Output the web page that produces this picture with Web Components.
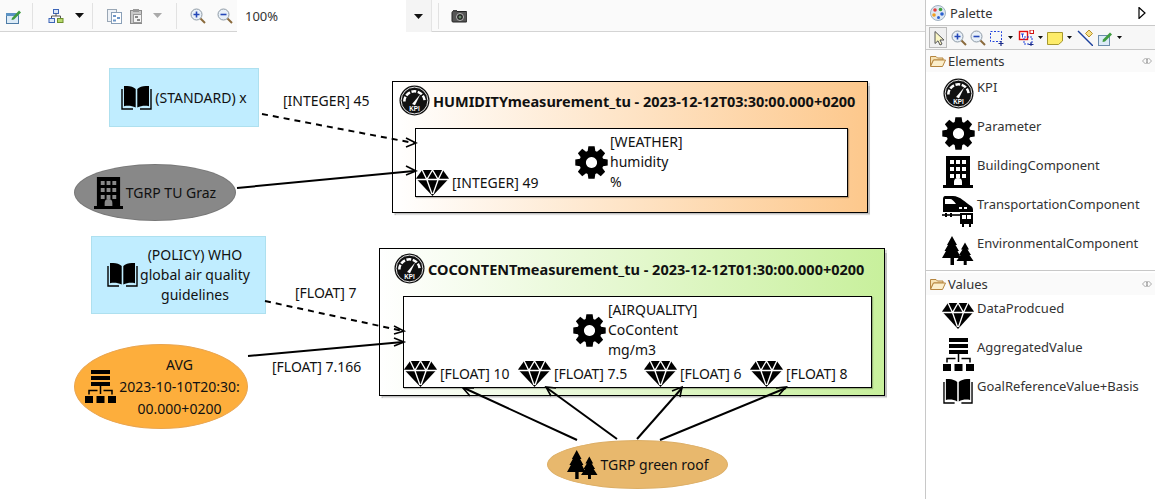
<!DOCTYPE html>
<html><head><meta charset="utf-8">
<style>
html,body{margin:0;padding:0;background:#fff;width:1155px;height:499px;overflow:hidden;font-family:"Noto Sans","Liberation Sans",sans-serif;color:#222}
</style></head><body>
<app-shell>
  <main-area slot="main">
    <top-bar></top-bar>
    <dia-gram></dia-gram>
  </main-area>
  <pal-ette slot="side"></pal-ette>
</app-shell>
<script>
function gearPath(){
  const c=16,R=16,r=11.8,n=8;let d='';
  for(let i=0;i<n;i++){
    const a=i*2*Math.PI/n-Math.PI/2,w=.26,w2=.19;
    const pts=[[r,a-w-.06],[R,a-w2],[R,a+w2],[r,a+w+.06]];
    pts.forEach((p,j)=>{d+=(i==0&&j==0?'M':'L')+(c+p[0]*Math.cos(p[1])).toFixed(2)+' '+(c+p[0]*Math.sin(p[1])).toFixed(2)+' ';});
  }
  return d+'Z M16 10.6a5.4 5.4 0 1 0 0.01 0Z';
}
const ICONS={
 kpi:['0 0 32 32','<circle cx="16" cy="16" r="15.5" fill="#111"/><circle cx="16" cy="16" r="13.8" fill="none" stroke="#fff" stroke-width=".9"/><path d="M5.5 17a10.5 10.5 0 0 1 21 0" fill="none" stroke="#fff" stroke-width="2.6" stroke-dasharray="5 1.6"/><path d="M13.5 19.5L22 9.5 16.5 21Z" fill="#fff"/><text x="16" y="27" text-anchor="middle" font-family="Liberation Sans" font-weight="700" font-size="6.5" fill="#fff">KPI</text>'],
 gear:['0 0 32 32','<path fill="#000" fill-rule="evenodd" d="'+gearPath()+'"/>'],
 building:['0 0 30 32','<path fill="#000" fill-rule="evenodd" d="M3 0H27V29H30V32H0V29H3ZM7 4V8H11V4ZM13 4V8H17V4ZM19 4V8H23V4ZM7 11V15H11V11ZM13 11V15H17V11ZM19 11V15H23V11ZM7 18V22H11V18ZM13 18V22H17V18ZM19 18V22H23V18ZM11 29H19V26A4 4 0 0 0 11 26Z"/>'],
 train:['0 0 32 32','<path fill="#000" fill-rule="evenodd" d="M3 1H11C18 1 24 8 29 11 31 12 31 14 31 16V17H1V4C1 2 2 1 3 1ZM3 4V9H14C12 6 10 4 8 4ZM17 12V14H20V12ZM22 12V14H25V12Z"/><path d="M0 20H18" stroke="#000" stroke-width="1.6"/><path d="M3 18H5V22H3ZM8 18H10V22H8Z" fill="#000"/><path fill="#000" fill-rule="evenodd" d="M18 18H31V29H29V32H27V29H22V32H20V29H18ZM20 20V24H24V20ZM25 20V24H29V20Z"/>'],
 trees:['0 0 32 29','<path fill="#000" d="M10 0L15 9H13.5L17 15H15.5L19 22H12V29H8.5V22H0L4 15H2.5L6 9H5Z"/><path fill="#000" d="M23 6.500L27 13.500H25.500L29 19H27.500L31.500 25H24.700V29H21.700V25H14.500L18.500 19H17L20.500 13.500H19Z"/>'],
 diamond:['0 0 32 27','<path fill="#000" d="M6 1H26L32 9.500 16 27 0 9.500Z"/><path fill="none" stroke="#fff" stroke-width="1.300" d="M0 10.500H32M6 1L10.500 10.500 16 1 21.500 10.500 26 1M10.500 10.500L15.500 25M21.500 10.500L16.500 25"/>'],
 agg:['0 0 31 33','<path fill="#000" d="M6 0H25V4H6ZM6 6H25V10H6ZM6 12H25V16H6ZM0 26H8V33H0ZM11.500 26H19.500V33H11.500ZM23 26H31V33H23Z"/><path fill="none" stroke="#000" stroke-width="1.500" d="M15.500 16V24M4 24.500V20.500H12.500M27 24.500V20.500H18.500"/>'],
 book:['0 0 31 25','<path fill="#000" d="M3 0C7 -.3 12 .5 14.700 3V22.500C11 20.500 7 20 3 21ZM28 0C24 -.3 19 .5 16.300 3V22.500C20 20.500 24 20 28 21Z"/><path fill="none" stroke="#000" stroke-width="1.400" d="M1 3V24H12M30 3V24H19"/>']
};
class XIc extends HTMLElement{connectedCallback(){
  const [vb,body]=ICONS[this.getAttribute('n')];const w=this.getAttribute('w'),h=this.getAttribute('h');
  this.attachShadow({mode:'open'}).innerHTML=`<style>:host{display:block;flex:none;width:${w}px;height:${h}px;line-height:0}svg{display:block}</style><svg width="${w}" height="${h}" viewBox="${vb}" preserveAspectRatio="none">${body}</svg>`;
}}
customElements.define('x-ic',XIc);

/* small toolbar icons */
const TB={
 edit:'<rect x="1.500" y="5.500" width="12" height="10" fill="#dcebf7" stroke="#4d7ba6"/><rect x="1" y="5" width="13" height="3" fill="#5c93c4"/><path d="M7 10L14 2.500 16 4.500 9 11.500 6.500 12Z" fill="#3f9b3f"/>',
 tree:'<rect x="5.500" y="1.500" width="5" height="4" fill="#dde8f7" stroke="#3c65b8"/><path d="M8 5.500V8M3.500 10V8H12.500V10" fill="none" stroke="#555"/><rect x="1" y="10.500" width="5.500" height="4" fill="#dde8f7" stroke="#3c65b8"/><rect x="9.500" y="10.500" width="5.500" height="4" fill="#b7d96d" stroke="#6d8f2c"/>',
 copy:'<rect x="1.500" y="1.500" width="9" height="12" fill="#eef2f7" stroke="#9aa7b5"/><rect x="5.500" y="4.500" width="10" height="11" fill="#fff" stroke="#8aa0b8"/><path d="M7 7H10V9H7ZM11 9H14V11H11ZM7 11.500H10V13.500H7Z" fill="#6f97c8"/>',
 paste:'<rect x="2.500" y="2.500" width="11" height="13" fill="#c9c9c9" stroke="#8b8b8b"/><rect x="5" y="1" width="6" height="3" fill="#999"/><rect x="5.500" y="6.500" width="8" height="8" fill="#f4f4f4" stroke="#999"/><path d="M7 8H10V10H7ZM9 11H12V13H9Z" fill="#888"/>',
 zin:'<circle cx="6.500" cy="6.500" r="5.500" fill="#e8f0f8" stroke="#8e9aa5"/><path d="M10.500 10.500L15 15" stroke="#8a6a3c" stroke-width="2"/><path d="M3.500 6.500H9.500M6.500 3.500V9.500" stroke="#2347b8" stroke-width="1.600"/>',
 zout:'<circle cx="6.500" cy="6.500" r="5.500" fill="#e8f0f8" stroke="#8e9aa5"/><path d="M10.500 10.500L15 15" stroke="#8a6a3c" stroke-width="2"/><path d="M3.500 6.500H9.500" stroke="#2347b8" stroke-width="1.600"/>',
 cam:'<rect x="1" y="3.500" width="15" height="10.500" rx="1" fill="#555" stroke="#222"/><rect x="2" y="2" width="4" height="2" fill="#444"/><circle cx="9" cy="9" r="3.500" fill="#222" stroke="#bbb"/><circle cx="9" cy="9" r="1.500" fill="#6b8a6b"/>',
 arrow:'<path d="M5 1.500V13.500L8 10.800 10 15 12 14 10 10H14Z" fill="#fbf7c4" stroke="#555"/>',
 marq:'<rect x="1.500" y="1.500" width="11" height="10" fill="none" stroke="#2244dd" stroke-dasharray="2 1.500"/><path d="M12 11V16M9.500 13.500H14.500" stroke="#1a2a88" stroke-width="1.200"/>',
 conn:'<rect x="1.500" y="1.500" width="8" height="8" fill="#fff" stroke="#e01010" stroke-width="1.400"/><rect x="12" y="0" width="3.500" height="3.500" fill="#fff" stroke="#d01010"/><rect x="6" y="7" width="8" height="7" fill="none" stroke="#2244dd" stroke-dasharray="2 1"/><path d="M3 4H6M4.500 4V7.500" stroke="#2244dd"/><path d="M13 12V17M10.500 14.500H15.500" stroke="#1a2a88"/>',
 note:'<path d="M.5 2.500H15.500V11L11.500 14.500H.5Z" fill="#fdec6a" stroke="#a5972f"/>',
 link:'<path d="M1 1L16 16" stroke="#1a3f9c" stroke-width="1.400"/><path d="M12 0L15.500 3.500 12 7 8.500 3.500Z" fill="#f6e08a" stroke="#b8912a"/>',
 notep:'<rect x="1.500" y="5.500" width="11" height="10" fill="#dcebf7" stroke="#6c8cac"/><path d="M6 9.500L13 2.500 15 4.500 8 11.500 5.500 12Z" fill="#3f9b3f"/>',
 select:'<circle cx="8" cy="8" r="7.500" fill="#dfe8f2" stroke="#9fb0c0"/><circle cx="5" cy="5" r="1.800" fill="#e04040"/><circle cx="10.500" cy="4.500" r="1.800" fill="#40a040"/><circle cx="12" cy="9" r="1.800" fill="#2a60d0"/><circle cx="4" cy="10" r="1.800" fill="#f0a020"/><circle cx="8.500" cy="12.500" r="1.500" fill="#2a60d0"/>'
};
class XT extends HTMLElement{connectedCallback(){
  const s=+this.getAttribute('s')||16;
  this.attachShadow({mode:'open'}).innerHTML=`<style>:host{display:block;flex:none;width:${s}px;height:${s}px;margin:var(--m,0)}svg{display:block}</style><svg width="${s}" height="${s}" viewBox="0 0 16 16">${TB[this.getAttribute('n')]}</svg>`;
}}
customElements.define('x-t',XT);
class XCaret extends HTMLElement{connectedCallback(){
  const c=this.getAttribute('c')||'#111',w=+this.getAttribute('w')||9,h=Math.ceil(w/2);
  this.attachShadow({mode:'open'}).innerHTML=`<style>:host{display:block;flex:none;width:${w}px;height:${h}px}svg{display:block}</style><svg width="${w}" height="${h}" viewBox="0 0 ${w} ${h}"><path d="M0 0H${w}L${w/2} ${h}Z" fill="${c}"/></svg>`;
}}
customElements.define('x-caret',XCaret);
class XSep extends HTMLElement{connectedCallback(){
  this.attachShadow({mode:'open'}).innerHTML=`<style>:host{display:block;flex:none;width:1px;height:26px;background:#e2e2e2}</style>`;
}}
customElements.define('x-sep',XSep);

class AppShell extends HTMLElement{constructor(){super();
  this.attachShadow({mode:'open'}).innerHTML=`<style>:host{display:grid;grid-template-columns:925px 230px;width:1155px;height:499px;overflow:hidden}</style><slot name="main"></slot><slot name="side"></slot>`;
}}
customElements.define('app-shell',AppShell);
class MainArea extends HTMLElement{constructor(){super();
  this.attachShadow({mode:'open'}).innerHTML=`<style>:host{display:flex;flex-direction:column;height:499px;width:925px}</style><slot></slot>`;
}}
customElements.define('main-area',MainArea);

class TopBar extends HTMLElement{constructor(){super();
  this.attachShadow({mode:'open'}).innerHTML=`<style>
  :host{display:flex;align-items:center;height:31px;width:925px;flex:none;background:#fafafa;border-bottom:1px solid #d4d4d4;box-sizing:content-box;font-size:13px;color:#333}
  .g{display:flex;align-items:center}
  .combo{width:195px;height:32px;align-self:flex-start;background:#fff;display:flex;align-items:center;justify-content:space-between;margin-left:4px;margin-top:0;position:relative;z-index:1}
  .combo span{padding-left:8px}
  .btn{width:25px;height:32px;background:#f4f4f4;border-right:1px solid #e4e4e4;display:flex;align-items:center;justify-content:center}
  </style>
  <div class="g" style="margin-left:5px;width:27px"><x-t n="edit"></x-t></div><x-sep></x-sep>
  <div class="g" style="margin-left:15px;width:47px;gap:11px"><x-t n="tree" style="--m:0"></x-t><x-caret></x-caret></div><x-sep style="margin-left:-3px"></x-sep>
  <div class="g" style="margin-left:13px;width:72px;gap:6px"><x-t n="copy"></x-t><x-t n="paste" style="--m:0 3px 0 0"></x-t><x-caret c="#aaa"></x-caret></div><x-sep style="margin-left:-2px"></x-sep>
  <div class="g" style="margin-left:13px;gap:11px"><x-t n="zin"></x-t><x-t n="zout"></x-t></div>
  <div class="combo"><span>100%</span><div class="btn"><x-caret></x-caret></div></div>
  <x-sep style="margin-left:6px"></x-sep>
  <div class="g" style="margin-left:12px"><x-t n="cam"></x-t></div>`;
}}
customElements.define('top-bar',TopBar);

class DiaNode extends HTMLElement{constructor(){super();
  this.attachShadow({mode:'open'}).innerHTML=`<style>
  :host{display:flex;position:absolute;box-sizing:border-box;align-items:center;justify-content:center;font-size:14px;line-height:20px;color:#111;text-align:center;gap:2px}
  :host([shape=ell]){border-radius:50%;border:1px solid rgba(0,0,0,.12)}
  </style><slot></slot>`;
}}
customElements.define('dia-node',DiaNode);
class DiaBox extends HTMLElement{constructor(){super();
  this.attachShadow({mode:'open'}).innerHTML=`<style>
  :host{display:block;position:absolute;box-sizing:border-box;border:1px solid #000;box-shadow:1.500px 2px 1px rgba(0,0,0,.25);font-size:14px;color:#111}
  .t{display:flex;align-items:center;gap:3px;position:absolute;left:var(--tl,6px);top:var(--tt,4px);font-weight:700;font-size:14.500px;white-space:nowrap}
  .in{position:absolute;box-sizing:border-box;background:#fff;border:1px solid #000;left:var(--il);top:var(--it);width:var(--iw);height:var(--ih);box-shadow:1px 1px 1px rgba(0,0,0,.25)}
  </style><div class="t"><slot name="title-icon"></slot><slot name="title"></slot></div><div class="in"><slot></slot></div>`;
}}
customElements.define('dia-box',DiaBox);
class DiaVal extends HTMLElement{constructor(){super();
  this.attachShadow({mode:'open'}).innerHTML=`<style>:host{display:flex;align-items:flex-end;gap:3px;white-space:nowrap;font-size:14px;line-height:20px}span{position:relative;padding-bottom:3px}</style><x-ic n="diamond" w="33" h="27"></x-ic><span><slot></slot></span>`;
}}
customElements.define('dia-val',DiaVal);
class DiaParam extends HTMLElement{constructor(){super();
  this.attachShadow({mode:'open'}).innerHTML=`<style>:host{display:flex;align-items:center;gap:2px;font-size:14px;line-height:20px;text-align:left}</style><x-ic n="gear" w="33" h="33"></x-ic><div><slot></slot></div>`;
}}
customElements.define('dia-param',DiaParam);

class DiaGram extends HTMLElement{constructor(){super();
  this.attachShadow({mode:'open'}).innerHTML=`<style>
  :host{display:block;position:relative;flex:1;background:#fff;overflow:hidden;--f:"Noto Sans"}
  svg{position:absolute;left:0;top:-32px}
  .lb{position:absolute;font-size:14px;line-height:20px;color:#111;white-space:nowrap;transform:translateY(-32px)}
  .b{background:#c0edff;border:1px solid #aee0ef}
  .vals{position:absolute;left:0;bottom:0;display:flex}
  .pr{position:absolute}
  </style>
  <dia-node class="b" style="left:109px;top:36px;width:150px;height:59px;gap:3px"><x-ic n="book" w="31" h="24"></x-ic><span>(STANDARD) x</span></dia-node>
  <dia-node shape="ell" style="left:74px;top:132px;width:162px;height:57px;background:#888;gap:3px"><x-ic n="building" w="29" h="32"></x-ic><span>TGRP TU Graz</span></dia-node>

  <dia-box style="left:392px;top:49px;width:476px;height:132px;background:linear-gradient(90deg,#fff,#fdc88c);--il:22px;--it:46px;--iw:433px;--ih:69px;--tl:6px;--tt:3px">
    <x-ic slot="title-icon" n="kpi" w="31" h="31"></x-ic><span slot="title">HUMIDITYmeasurement_tu - 2023-12-12T03:30:00.000+0200</span>
    <dia-val style="position:absolute;left:0;bottom:0">[INTEGER] 49</dia-val>
    <dia-param class="pr" style="position:absolute;left:159px;top:3px">[WEATHER]<br>humidity<br>%</dia-param>
  </dia-box>

  <dia-node class="b" style="left:91px;top:204px;width:175px;height:78px;gap:2px"><x-ic n="book" w="31" h="24"></x-ic><span>(POLICY) WHO<br>global air quality<br>guidelines</span></dia-node>
  <dia-node shape="ell" style="left:74px;top:312px;width:174px;height:85px;background:#fdae3c;border-color:#e9a550;gap:4px;padding-left:3px"><x-ic n="agg" w="31" h="33"></x-ic><span style="line-height:22px;margin-left:-1px">AVG<br>2023-10-10T20:30:<br>00.000+0200</span></dia-node>

  <dia-box style="left:379px;top:216px;width:506px;height:148px;background:linear-gradient(90deg,#fff,#c8f09c);--il:23px;--it:47px;--iw:469px;--ih:92px;--tl:14px;--tt:4px">
    <x-ic slot="title-icon" n="kpi" w="31" h="31"></x-ic><span slot="title">COCONTENTmeasurement_tu - 2023-12-12T01:30:00.000+0200</span>
    <dia-param style="position:absolute;left:169px;top:3px">[AIRQUALITY]<br>CoContent<br>mg/m3</dia-param>
    <dia-val style="position:absolute;left:0;bottom:0">[FLOAT] 10</dia-val>
    <dia-val style="position:absolute;left:114px;bottom:0">[FLOAT] 7.5</dia-val>
    <dia-val style="position:absolute;left:240px;bottom:0">[FLOAT] 6</dia-val>
    <dia-val style="position:absolute;left:346px;bottom:0">[FLOAT] 8</dia-val>
  </dia-box>

  <dia-node shape="ell" style="left:547px;top:408px;width:181px;height:49px;background:#e8b86d;border-color:#dcae66;gap:3px"><x-ic n="trees" w="31" h="29"></x-ic><span>TGRP green roof</span></dia-node>

  <svg width="925" height="500" viewBox="0 0 925 500" style="pointer-events:none">
    <g fill="none" stroke="#000" stroke-width="2">
      <path d="M262 114L414 143" stroke-dasharray="6 5"/>
      <path d="M237 188L414 171"/>
      <path d="M265 301L403 331" stroke-dasharray="6 5"/>
      <path d="M248 356L403 342"/>
      <path d="M577 440L464 388"/>
      <path d="M617 439L547 388"/>
      <path d="M637 439L682 388"/>
      <path d="M660 440L786 388"/>
      <g stroke-width="1.600" stroke-linejoin="miter">
      <path d="M406 138L416 143 406 147"/>
      <path d="M406 166L416 171 406 175"/>
      <path d="M394 326L404 331 394 334"/>
      <path d="M394 338L404 342 394 346"/>
      <path d="M474 388L463 388 470 396"/>
      <path d="M556 388L546 387 551 396"/>
      <path d="M672 391L682 387 680 397"/>
      <path d="M776 388L786 387 779 395"/>
      </g>
    </g>
  </svg>
  <div class="lb" style="left:283px;top:123px;transform:none;top:59px">[INTEGER] 45</div>
  <div class="lb" style="left:295px;top:251px;transform:none">[FLOAT] 7</div>
  <div class="lb" style="left:272px;top:325px;transform:none">[FLOAT] 7.166</div>`;
}}
customElements.define('dia-gram',DiaGram);

class PalHead extends HTMLElement{constructor(){super();
  this.attachShadow({mode:'open'}).innerHTML=`<style>
  :host{display:flex;align-items:center;height:22px;background:#fafafa;font-size:13px;color:#333;padding-left:4px;gap:2px}
  svg{display:block;flex:none}
  .t{flex:1}
  </style><svg width="16" height="14" viewBox="0 0 16 14"><path d="M.5 2.500H6L7.500 4H13V6H3.500L.5 12Z" fill="#f6e2b4" stroke="#b5853f"/><path d="M3.500 6H15.500L12.500 12.500H.5Z" fill="#fbeecb" stroke="#b5853f"/></svg><span class="t"><slot></slot></span><svg width="10" height="8" viewBox="0 0 10 8" style="margin-right:3px"><path d="M3.500 1L.5 4 3.500 7M6.500 1L9.500 4 6.500 7M4 1L6 7M6 1L4 7" fill="none" stroke="#aaa"/></svg>`;
}}
customElements.define('pal-head',PalHead);
class PalItem extends HTMLElement{constructor(){super();
  const n=this.getAttribute('n'),w=this.getAttribute('w'),h=this.getAttribute('h'),t=this.getAttribute('t')||0,l=this.getAttribute('l')||17;
  this.attachShadow({mode:'open'}).innerHTML=`<style>
  :host{display:block;position:relative;height:39px;font-size:13px;line-height:18px;color:#333}
  .r{display:flex;align-items:flex-start;height:39px}
  .ic{width:51px;flex:none;box-sizing:border-box;padding-left:${l}px;padding-top:${t}px}
  .tx{padding-top:${this.getAttribute('tt')||0}px}
  </style><div class="r"><div class="ic"><x-ic n="${n}" w="${w}" h="${h}"></x-ic></div><div class="tx"><slot></slot></div></div>`;
}}
customElements.define('pal-item',PalItem);

class PalEtte extends HTMLElement{constructor(){super();
  this.attachShadow({mode:'open'}).innerHTML=`<style>
  :host{display:flex;flex-direction:column;width:230px;height:499px;box-sizing:border-box;border-left:1px solid #c8c8c8;background:#fff;font-size:13px;color:#333}
  .head{display:flex;align-items:center;height:25px;flex:none;padding-left:4px;gap:4px;font-size:13px;background:#fff;border-bottom:1px solid #c8c8c8;box-sizing:content-box}
  .head span{flex:1}
  .tools{display:flex;align-items:center;height:23px;flex:none;background:#f7f7f7;border-bottom:1px solid #c8c8c8;padding-left:3px;gap:4px}
  .sel{width:16px;height:19px;border:1px solid #bbb;background:#f0f0f0;display:flex;align-items:center;justify-content:center}
  .list{padding-top:6px;flex:none}
  .d{border-top:1px solid #ddd;flex:none;margin-top:0}
  .rule{height:2px;border-top:1px solid #c8c8c8;background:#fff;flex:none}
  </style>
  <div class="head"><x-t n="select"></x-t><span>Palette</span><svg width="8" height="12" viewBox="0 0 8 12" style="margin-right:9px"><path d="M1 .5V11.500L7 6Z" fill="#fff" stroke="#000" stroke-width="1.200"/></svg></div>
  <div class="tools">
    <div class="sel"><x-t n="arrow"></x-t></div><x-t n="zin"></x-t><x-t n="zout" style="--m:0 -1px"></x-t><x-t n="marq" style="--m:0 -1px 0 0"></x-t><x-caret w="5"></x-caret><x-t n="conn" style="--m:0 0 0 1px"></x-t><x-caret w="5"></x-caret><x-t n="note"></x-t><x-caret w="5"></x-caret><x-t n="link" style="--m:0 0 0 1px"></x-t><x-t n="notep"></x-t><x-caret w="5"></x-caret>
  </div>
  <pal-head>Elements</pal-head>
  <div class="list">
    <pal-item n="kpi" w="31" h="31">KPI</pal-item>
    <pal-item n="gear" w="33" h="33" l="16">Parameter</pal-item>
    <pal-item n="building" w="30" h="32">BuildingComponent</pal-item>
    <pal-item n="train" w="32" h="32" l="16">TransportationComponent</pal-item>
    <pal-item n="trees" w="32" h="29" l="16" t="2">EnvironmentalComponent</pal-item>
  </div>
  <div class="rule" style="margin-top:-3px"></div>
  <pal-head>Values</pal-head>
  <div class="list" style="padding-top:4px">
    <pal-item n="diamond" w="32" h="27" l="16" t="3">DataProdcued</pal-item>
    <pal-item n="agg" w="31" h="33" l="17" t="-3">AggregatedValue</pal-item>
    <pal-item n="book" w="30" h="25" l="17" t="2">GoalReferenceValue+Basis</pal-item>
  </div>`;
}}
customElements.define('pal-ette',PalEtte);
</script>
</body></html>
